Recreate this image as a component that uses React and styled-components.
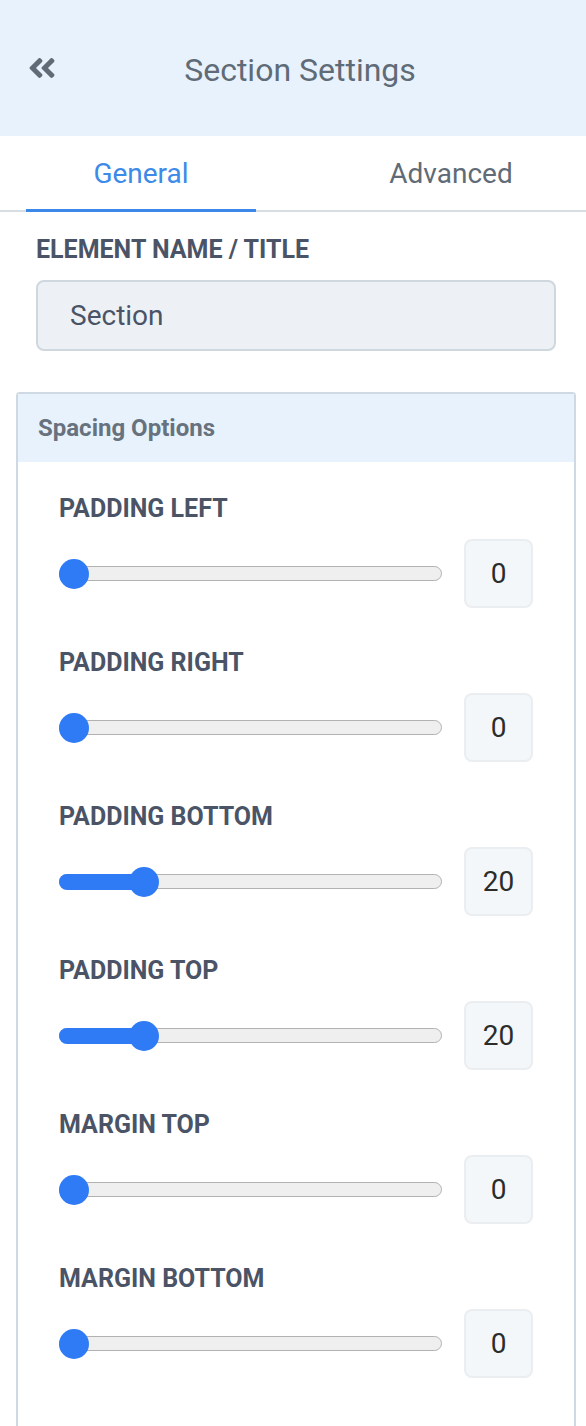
import React from 'react';
import styled, { createGlobalStyle } from 'styled-components';
import { FaAngleDoubleLeft } from 'react-icons/fa';

const GlobalStyle = createGlobalStyle`
  body {
    margin: 0;
    background: #ffffff;
    font-family: Roboto, "Liberation Sans", Arial, sans-serif;
  }
`;

const Sidebar = styled.div`
  width: 586px;
  min-height: 1426px;
  background: #ffffff;
  overflow: hidden;
  display: flex;
  flex-direction: column;
`;

const Header = styled.div`
  height: 136px;
  flex-shrink: 0;
  background: #e8f2fd;
  display: flex;
  align-items: center;
  padding: 0 26px;
  box-sizing: border-box;
`;

const BackButton = styled.button`
  border: none;
  background: none;
  padding: 0;
  color: #5f6b76;
  display: flex;
  align-items: center;
  cursor: pointer;
`;

const Title = styled.h1`
  flex: 1;
  margin: 0;
  text-align: center;
  font-size: 32px;
  line-height: 38px;
  font-weight: 400;
  color: #5f6b76;
  padding: 3px 18px 0 0;
`;

const TabBar = styled.div`
  height: 76px;
  flex-shrink: 0;
  display: flex;
  justify-content: space-between;
  padding: 0 20px 0 26px;
  border-bottom: 2px solid #d8dde3;
  box-sizing: border-box;
`;

const Tab = styled.div`
  width: 230px;
  display: flex;
  align-items: center;
  justify-content: center;
  font-size: 28px;
  color: ${p => (p.$active ? '#3d8ae8' : '#5f6b76')};
  border-bottom: 3px solid ${p => (p.$active ? '#3b88e8' : 'transparent')};
  margin-bottom: -2px;
  padding-top: 2px;
`;

const Field = styled.div`
  padding: 24px 30px 0 36px;
`;

const Label = styled.div`
  font-size: 25px;
  font-weight: 700;
  color: #4a5466;
  text-transform: uppercase;
  line-height: 28px;
  margin-bottom: 16px;
`;

const TextInput = styled.div`
  height: 71px;
  box-sizing: border-box;
  background: #edf1f6;
  border: 2px solid #cfd7df;
  border-radius: 8px;
  display: flex;
  align-items: center;
  padding-left: 32px;
  font-size: 28px;
  color: #4a5466;
`;

const Panel = styled.div`
  flex: 1;
  margin: 41px 10px 0 16px;
  border: 2px solid #cfd9e3;
  border-bottom: none;
  border-radius: 4px 4px 0 0;
`;

const PanelHeader = styled.div`
  height: 68px;
  background: #e8f2fd;
  display: flex;
  align-items: center;
  padding-left: 20px;
  font-size: 24px;
  font-weight: 700;
  color: #67727e;
`;

const PanelBody = styled.div`
  padding: 33px 41px 0 41px;
`;

const Control = styled.div`
  margin-bottom: 41px;
`;

const SliderRow = styled.div`
  display: flex;
  align-items: center;
  gap: 22px;
`;

const Track = styled.div`
  position: relative;
  flex: 1;
  height: 15px;
  box-sizing: border-box;
  background: #efefef;
  border: 1.5px solid #b2b2b2;
  border-radius: 8px;
`;

const Fill = styled.div`
  position: absolute;
  left: -1.5px;
  top: -1.5px;
  bottom: -1.5px;
  background: #2f7bf5;
  border-radius: 8px 0 0 8px;
`;

const Thumb = styled.div`
  position: absolute;
  top: 50%;
  width: 30px;
  height: 30px;
  margin-top: -15px;
  border-radius: 50%;
  background: #2f7bf5;
`;

const ValueBox = styled.div`
  width: 69px;
  height: 69px;
  box-sizing: border-box;
  background: #f4f7fa;
  border: 2px solid #ebeef0;
  border-radius: 8px;
  display: flex;
  align-items: center;
  justify-content: center;
  font-size: 28px;
  color: #2c2c2c;
`;

const TRACK_WIDTH = 382;
const THUMB = 30;

const Slider = ({ value, max = 100 }) => {
  const left = (value / max) * (TRACK_WIDTH - THUMB) - 1.5;
  return (
    <Track>
      {value > 0 && <Fill style={{ width: left + THUMB / 2 + 1.5 }} />}
      <Thumb style={{ left }} />
    </Track>
  );
};

const spacing = [
  { label: 'Padding Left', value: 0 },
  { label: 'Padding Right', value: 0 },
  { label: 'Padding Bottom', value: 20 },
  { label: 'Padding Top', value: 20 },
  { label: 'Margin Top', value: 0 },
  { label: 'Margin Bottom', value: 0 },
];

const App = () => {
  return (
    <>
      <GlobalStyle />
      <Sidebar>
        <Header>
          <BackButton>
            <FaAngleDoubleLeft size={32} />
          </BackButton>
          <Title>Section Settings</Title>
        </Header>
        <TabBar>
          <Tab $active>General</Tab>
          <Tab>Advanced</Tab>
        </TabBar>
        <Field>
          <Label>Element Name / Title</Label>
          <TextInput>Section</TextInput>
        </Field>
        <Panel>
          <PanelHeader>Spacing Options</PanelHeader>
          <PanelBody>
            {spacing.map(item => (
              <Control key={item.label}>
                <Label>{item.label}</Label>
                <SliderRow>
                  <Slider value={item.value} />
                  <ValueBox>{item.value}</ValueBox>
                </SliderRow>
              </Control>
            ))}
          </PanelBody>
        </Panel>
      </Sidebar>
    </>
  );
};

export default App;
